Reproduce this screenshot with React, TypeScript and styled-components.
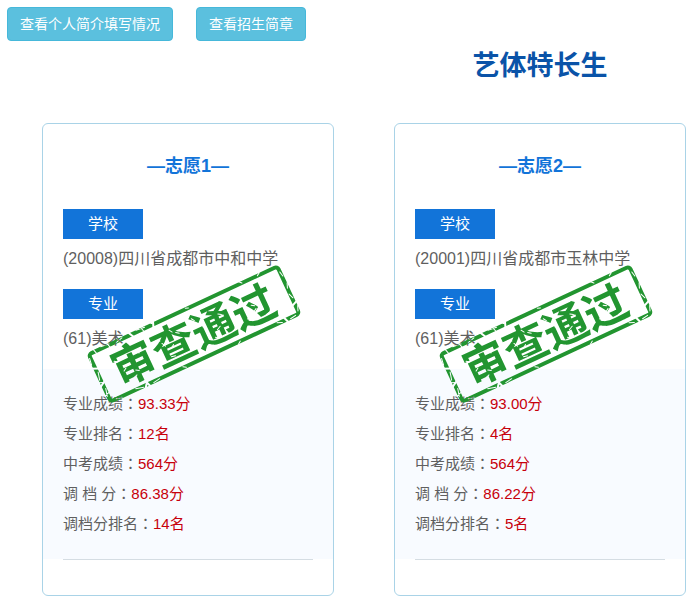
import React, { useId } from 'react';
import styled, { createGlobalStyle } from 'styled-components';

const GlobalStyle = createGlobalStyle`
  *, *::before, *::after {
    box-sizing: border-box;
  }
  body {
    margin: 0;
    background: #fff;
    color: #5f5f5f;
    font-family: 'Liberation Sans', 'Noto Sans CJK SC', sans-serif;
    font-size: 15px;
  }
`;

const Page = styled.main`
  padding: 7px 14px 14px 7px;
`;

const Toolbar = styled.div`
  display: flex;
  flex-wrap: wrap;
  gap: 23px;
`;

const InfoButton = styled.button`
  height: 34px;
  padding: 0 12px;
  border: 1px solid #46b8da;
  border-radius: 4px;
  background: #5bc0de;
  color: #fff;
  font-family: inherit;
  font-size: 14px;
  line-height: 20px;
  cursor: pointer;
`;

const Choices = styled.section`
  display: grid;
  grid-template-columns: 1fr 1fr;
  column-gap: 60px;
  padding-left: 35px;
`;

const Title = styled.h1`
  grid-column: 2;
  margin: 0 0 32px;
  color: #0a53a8;
  font-size: 27px;
  font-weight: 700;
  line-height: 50px;
  text-align: center;
`;

const Card = styled.article`
  position: relative;
  padding-bottom: 35px;
  border: 1px solid #a9d3e7;
  border-radius: 6px;
  background: #fff;
`;

const CardTitle = styled.h2`
  margin: 0;
  color: #1274d9;
  font-size: 18px;
  line-height: 85px;
  text-align: center;
`;

const Field = styled.div`
  padding: 0 20px;
  margin-bottom: 10px;
`;

const Tag = styled.h3`
  width: 80px;
  margin: 0;
  background: #1274d9;
  color: #fff;
  font-size: 15px;
  font-weight: 400;
  line-height: 30px;
  text-align: center;
`;

const FieldText = styled.p`
  margin: 0;
  font-size: 16px;
  line-height: 40px;
`;

const Scores = styled.dl`
  margin: 0;
  padding: 20px;
  background: #f8fbff;
`;

const ScoreRow = styled.div`
  display: flex;
  line-height: 30px;
`;

const ScoreName = styled.dt``;

const Colon = styled.span`
  font-family: 'Noto Sans CJK TC', sans-serif;
  line-height: 1;
`;

const ScoreValue = styled.dd`
  margin: 0;
  color: #c7000b;
`;

const Divider = styled.hr`
  height: 1px;
  margin: 0 20px;
  border: 0;
  background: #d5dde3;
`;

const StampMark = styled.svg`
  position: absolute;
  top: 138px;
  left: 41px;
  pointer-events: none;
`;

const StampText = styled.text`
  font-family: 'Noto Sans CJK SC', sans-serif;
  font-size: 44px;
  font-weight: 700;
`;

function Stamp() {
  const maskId = useId();
  return (
    <StampMark width="220" height="144" viewBox="0 0 220 144" role="img" aria-label="审查通过">
      <defs>
        <mask id={maskId} maskUnits="userSpaceOnUse" x="-115" y="-40" width="230" height="80">
          <rect x="-115" y="-40" width="230" height="80" fill="#fff" />
          <g stroke="#000" fill="none" strokeLinecap="round">
            <path
              strokeWidth="2"
              d="M-31-31l-3 8M-36-31l2 3M-60-31l4 8M-64 22l3 8M-67 29l3-4M88 22l3 8M-108-12l7 3M-108 9l7-4M101 16l7-3"
            />
            <path
              strokeWidth="1"
              d="M-98-29l2 7M-90-28l9 1M-83-28l2 6M-75-25l8-2M-72-29l3 6M-51-28l9 1M-46-29l2 6M3-27l3 1M62-29l3 3M82-26l3-2M-105-22l-1 7M-103-6l-2 8M-107 4l5 2M-103 12l-2 8M-108 19l6-2M-98 26l6 1M-76 25l8 2M-57 27l7-1M-24 25l3 2M36 28l3-2M80 25l5 2M94 27l6-1M104-20l1 5M106-7l-2 5M103 4l2 5M106 18l-2 5"
            />
            <path
              strokeWidth="1"
              d="M-84-9l3 2M-79 4l3-2M-68 8l3 2M-58-6l2-3M-72 14l3-1M-38-10l4 2M-33-5l2 4M-26 3l3-2M-30 11l4 1M-16-9l3 2M-21-14l2 3M4-15l2 3M11-3l3 2M23 6l4-2M18 12l3 2M30-8l3 2M55 9l4-1M64-2l3 2M67 3l-3 2M74 13l4-1"
            />
          </g>
        </mask>
      </defs>
      <g transform="translate(110 72) rotate(-25)">
        <g mask={`url(#${maskId})`} fill="#229530">
          <rect x="-104" y="-26" width="208" height="52" rx="3" fill="none" stroke="#229530" strokeWidth="4" />
          <StampText x="-1" y="17" textAnchor="middle">
            审查通过
          </StampText>
        </g>
      </g>
    </StampMark>
  );
}

interface Choice {
  name: string;
  school: string;
  major: string;
  scores: [string, string][];
}

const choices: Choice[] = [
  {
    name: '志愿1',
    school: '(20008)四川省成都市中和中学',
    major: '(61)美术',
    scores: [
      ['专业成绩', '93.33分'],
      ['专业排名', '12名'],
      ['中考成绩', '564分'],
      ['调 档 分', '86.38分'],
      ['调档分排名', '14名'],
    ],
  },
  {
    name: '志愿2',
    school: '(20001)四川省成都市玉林中学',
    major: '(61)美术',
    scores: [
      ['专业成绩', '93.00分'],
      ['专业排名', '4名'],
      ['中考成绩', '564分'],
      ['调 档 分', '86.22分'],
      ['调档分排名', '5名'],
    ],
  },
];

function ChoiceCard({ choice }: { choice: Choice }) {
  return (
    <Card>
      <CardTitle>—{choice.name}—</CardTitle>
      <Field>
        <Tag>学校</Tag>
        <FieldText>{choice.school}</FieldText>
      </Field>
      <Field>
        <Tag>专业</Tag>
        <FieldText>{choice.major}</FieldText>
      </Field>
      <Scores>
        {choice.scores.map(([name, value]) => (
          <ScoreRow key={name}>
            <ScoreName>
              {name}
              <Colon lang="zh-TW">：</Colon>
            </ScoreName>
            <ScoreValue>{value}</ScoreValue>
          </ScoreRow>
        ))}
      </Scores>
      <Divider />
      <Stamp />
    </Card>
  );
}

export default function App() {
  return (
    <Page lang="zh-CN">
      <GlobalStyle />
      <Toolbar>
        <InfoButton type="button">查看个人简介填写情况</InfoButton>
        <InfoButton type="button">查看招生简章</InfoButton>
      </Toolbar>
      <Choices>
        <Title>艺体特长生</Title>
        {choices.map((choice) => (
          <ChoiceCard key={choice.name} choice={choice} />
        ))}
      </Choices>
    </Page>
  );
}
